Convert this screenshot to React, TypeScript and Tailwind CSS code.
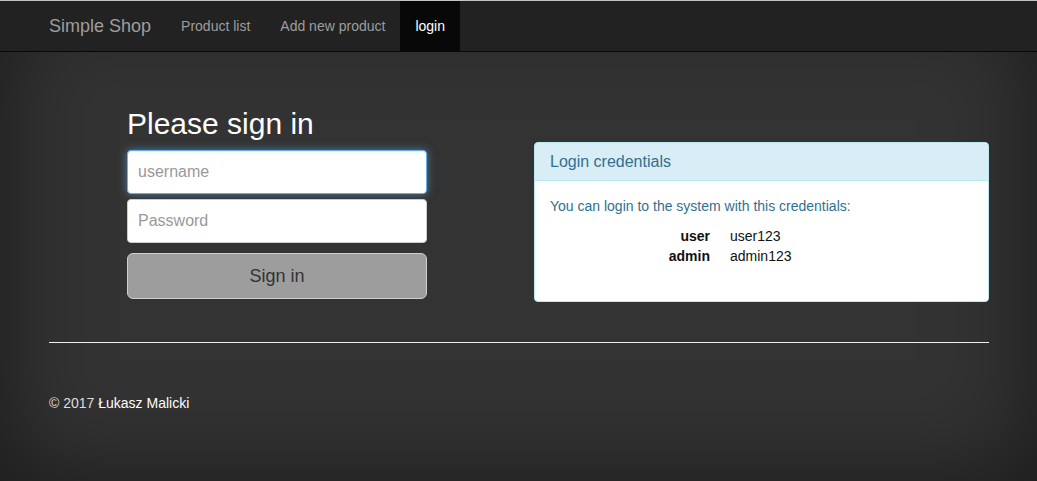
import { useState } from 'react';

const NAV_ITEMS = [
  { label: 'Product list', active: false },
  { label: 'Add new product', active: false },
  { label: 'login', active: true }
];

const CREDENTIALS = [
  { login: 'user', password: 'user123' },
  { login: 'admin', password: 'admin123' }
];

export default function App() {
  const [username, setUsername] = useState('');
  const [password, setPassword] = useState('');

  return (
    <div className="min-h-screen bg-[#333] shadow-[inset_0_0_100px_rgba(0,0,0,0.5)] text-[14px] leading-[20px] text-[#333] font-['Liberation_Sans',Arial,sans-serif]">
      {/* Navbar */}
      <nav className="relative z-10 bg-[#222] border-t border-t-[#c4c4c4] border-b border-b-[#080808]">
        <div className="w-[941px] mx-auto pl-[1px] flex h-[50px]">
          <a href="#" className="-ml-[15px] px-[15px] py-[15px] text-[18px] leading-[20px] text-[#9d9d9d]">
            Simple Shop
          </a>
          <ul className="flex">
            {NAV_ITEMS.map((item) => (
              <li key={item.label}>
                <a
                  href="#"
                  className={
                    item.active
                      ? 'block px-[15px] py-[15px] leading-[20px] bg-[#080808] text-white'
                      : 'block px-[15px] py-[15px] leading-[20px] text-[#9d9d9d]'
                  }
                >
                  {item.label}
                </a>
              </li>
            ))}
          </ul>
        </div>
      </nav>

      <div className="w-[941px] mx-auto pl-[1px] pt-[20px]">
        <div className="grid grid-cols-2 gap-[30px]">
          {/* Sign in form */}
          <div>
            <form className="w-[300px] ml-[78px] pt-[15px] pb-[15px]" onSubmit={(e) => e.preventDefault()}>
              <h2 className="mt-[20px] mb-[10px] text-[30px] leading-[33px] text-white">Please sign in</h2>
              <input
                type="text"
                value={username}
                onChange={(e) => setUsername(e.target.value)}
                placeholder="username"
                className="block w-full h-[44px] px-[10px] text-[16px] text-[#555] bg-white rounded-[4px] border border-[#66afe9] shadow-[inset_0_1px_1px_rgba(0,0,0,0.075),0_0_8px_rgba(102,175,233,0.6)] outline-none placeholder:text-[#999]"
              />
              <input
                type="password"
                value={password}
                onChange={(e) => setPassword(e.target.value)}
                placeholder="Password"
                className="block w-full h-[44px] mt-[5px] px-[10px] text-[16px] text-[#555] bg-white rounded-[4px] border border-[#ccc] outline-none placeholder:text-[#999]"
              />
              <button
                type="submit"
                className="block w-full h-[46px] mt-[10px] text-[18px] text-[#333] bg-[#9d9d9d] border border-[#cfcfcf] rounded-[6px]"
              >
                Sign in
              </button>
            </form>
          </div>

          {/* Credentials panel */}
          <div>
            <div className="mt-[70px] mb-[20px] bg-white border border-[#bce8f1] rounded-[4px] overflow-hidden">
              <div className="px-[15px] py-[10px] bg-[#d9edf7] border-b border-[#bce8f1]">
                <h3 className="text-[16px] leading-[17px] text-[#31708f]">Login credentials</h3>
              </div>
              <div className="p-[15px]">
                <p className="mb-[10px] text-[#31708f]">You can login to the system with this credentials:</p>
                <dl className="mb-[20px] text-[#111]">
                  {CREDENTIALS.map((c) => (
                    <div key={c.login} className="flex">
                      <dt className="w-[160px] text-right font-bold">{c.login}</dt>
                      <dd className="ml-[20px]">{c.password}</dd>
                    </div>
                  ))}
                </dl>
              </div>
            </div>
          </div>
        </div>

        <hr className="mt-[20px] mb-[20px] border-0 border-t border-[#eee]" />

        <footer className="pt-[30px] pb-[30px]">
          <p className="text-[#ddd]">
            © 2017 <a href="#" className="text-white">Łukasz Malicki</a>
          </p>
        </footer>
      </div>
    </div>
  );
}
